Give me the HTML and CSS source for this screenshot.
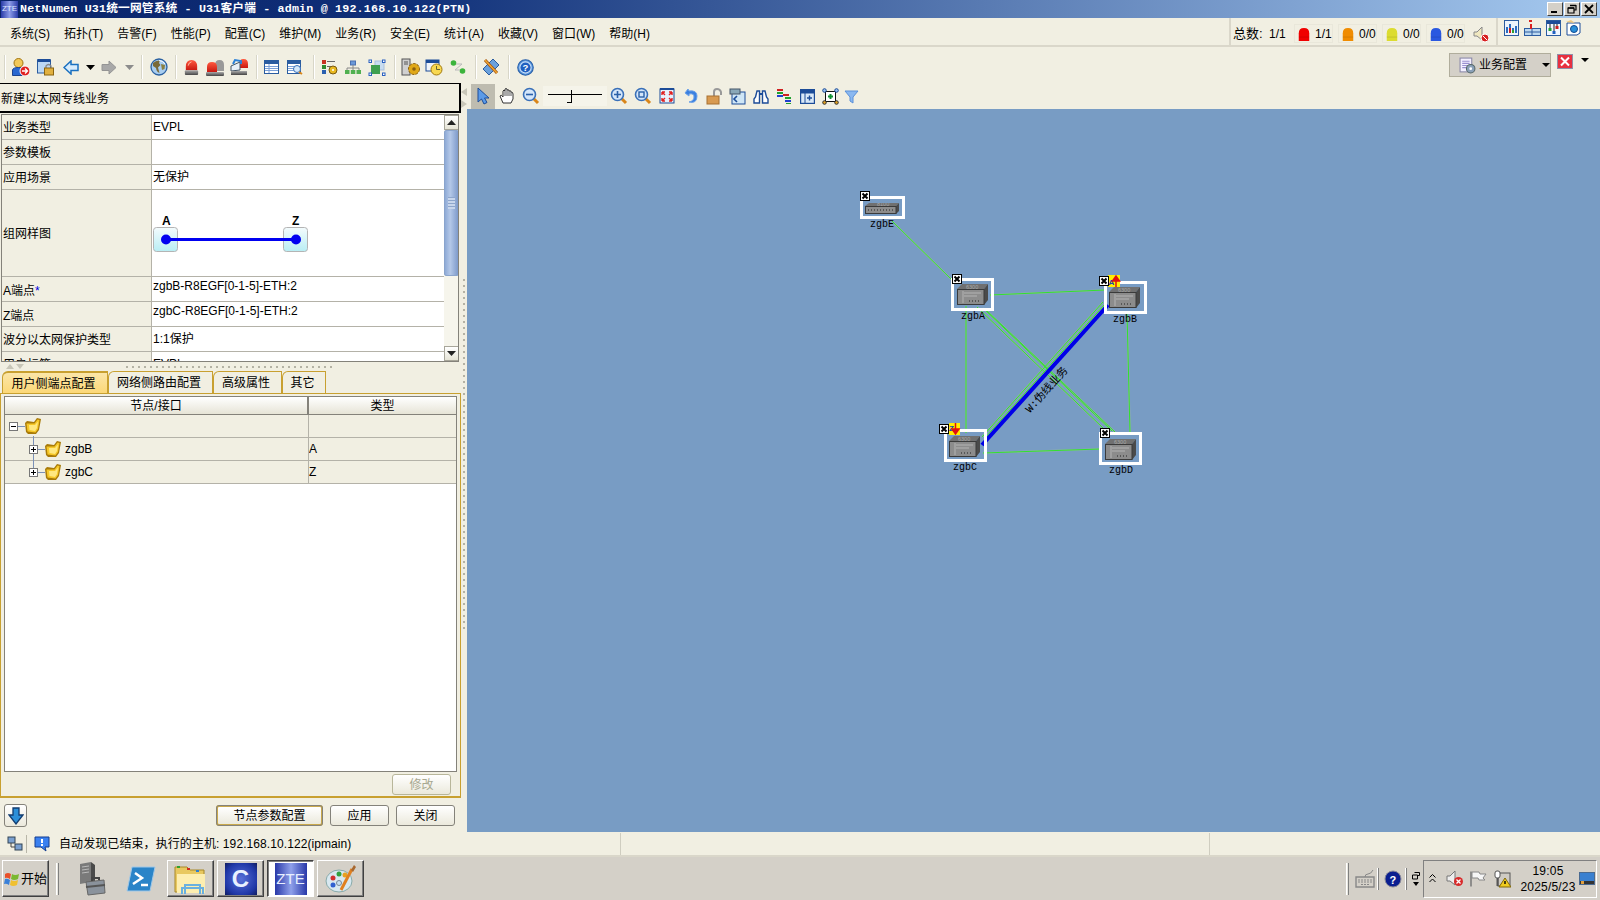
FILE: index.html
```html
<!DOCTYPE html>
<html lang="zh">
<head>
<meta charset="utf-8">
<title>NetNumen U31</title>
<link rel="stylesheet" href="styles.css">
</head>
<body>
<svg class="defs" width="0" height="0" aria-hidden="true">
  <defs>
    <symbol id="bell" viewBox="0 0 16 16" preserveAspectRatio="none"><path d="M1 16V7Q1 1 8 1T15 7V16Z" fill="currentColor"/><path d="M1 11.500H15" stroke="#000" stroke-opacity=".14"/></symbol>
    <linearGradient id="redg" x1="0" y1="0" x2="0" y2="1"><stop offset="0" stop-color="#ff5a40"/><stop offset="1" stop-color="#c81810"/></linearGradient>
    <linearGradient id="baseg" x1="0" y1="0" x2="0" y2="1"><stop offset="0" stop-color="#aaa"/><stop offset="1" stop-color="#444"/></linearGradient>
    <symbol id="alarm" viewBox="0 0 18 18"><path d="M3 12V8Q3 1 9 1T15 8V12Z" fill="url(#redg)"/><path d="M5.500 7Q6 3.500 9 3" stroke="#ffc0a8" fill="none"/><rect x="2" y="12" width="14" height="5" rx="1" fill="url(#baseg)"/></symbol>
    <symbol id="folder" viewBox="0 0 16 16"><path d="M0 5L1 14 3 16 11 16 14 12 16 1 12 0 9 4 2 3Z" fill="#a87a08"/><path d="M1.500 5.500L2.500 13.500 10.500 14.500 13 11 14.500 2 12.500 1.500 9.500 5.500Z" fill="#f6c828"/><path d="M4 7L4.500 12 10 13 12 10 13 3.500 10 7Z" fill="#ffe880"/></symbol>
    <symbol id="zoomic" viewBox="0 0 18 18"><path d="M11 11L16 16" stroke="#d9861a" stroke-width="3"/><circle cx="7.500" cy="7.500" r="6" fill="#d4e6fa" stroke="#3a70b8" stroke-width="1.600"/></symbol>
    <symbol id="dev6300" viewBox="0 0 31 21"><path d="M0 5L5 0H31L27 5Z" fill="#707070"/><path d="M27 5L31 0V16L27 21Z" fill="#4a4a4a"/><rect x=".5" y="5.500" width="26.500" height="15" fill="#8c8c8c" stroke="#3a3a3a"/><path d="M6 7V19M7 9H24M7 12H20" stroke="#b4b4b4"/><path d="M12 17H24" stroke="#222" stroke-dasharray="1 2"/><text x="9" y="4.500" class="devtext">6300</text></symbol>
    <symbol id="dev8100" viewBox="0 0 34 11"><path d="M0 3L4 0H34L31 3Z" fill="#707070"/><path d="M31 3L34 0V8L31 11Z" fill="#4a4a4a"/><rect x=".5" y="3.500" width="30.500" height="7" fill="#8c8c8c" stroke="#3a3a3a"/><path d="M3 7H29" stroke="#222" stroke-dasharray="1 2"/><text x="12" y="3" class="devtext">8100</text></symbol>
    <symbol id="xmark" viewBox="0 0 10 10"><rect x=".5" y=".5" width="9" height="9" fill="#fff" stroke="#000"/><path d="M2.500 2.500L7.500 7.500M7.500 2.500L2.500 7.500" stroke="#000" stroke-width="2"/></symbol>
    <g id="lk">
      <path d="M892 221L952 280"/><path d="M990 295L1105 290"/><path d="M966 306V433"/>
      <path d="M986 310L1115 432"/><path d="M983 308L1112 431"/><path d="M977 307L1103 428"/><path d="M1127 313L1130 433"/><path d="M983 453L1100 449"/><path d="M1103 302L982 437"/><path d="M1105 304L984 439"/>
    </g>
  </defs>
</svg>

<div class="title">
  <span class="ztelogo">ZTE</span>
  <span class="titletext">NetNumen U31统一网管系统 - U31客户端 - admin @ 192.168.10.122(PTN)</span>
  <span class="winbtns">
    <span class="winbtn"><svg width="14" height="12"><path d="M3 9H9" stroke="#000" stroke-width="2"/></svg></span>
    <span class="winbtn"><svg width="14" height="12"><path d="M5 2.500H11V7H9M3 5H9V10H3Z" fill="none" stroke="#000" stroke-width="1.200"/><path d="M5 2.500H11M3 5H9" stroke="#000" stroke-width="1.600"/></svg></span>
    <span class="winbtn"><svg width="14" height="12"><path d="M3 2L11 10M11 2L3 10" stroke="#000" stroke-width="1.800"/></svg></span>
  </span>
</div>

<div class="menubar">
  <nav class="menus">
    <span>系统(S)</span><span>拓扑(T)</span><span>告警(F)</span><span>性能(P)</span><span>配置(C)</span><span>维护(M)</span><span>业务(R)</span><span>安全(E)</span><span>统计(A)</span><span>收藏(V)</span><span>窗口(W)</span><span>帮助(H)</span>
  </nav>
  <div class="alarms">
    <span class="altotal">总数:</span><span class="alfirst">1/1</span>
    <span class="alarm red"><svg width="12" height="14"><use href="#bell"/></svg>1/1</span>
    <span class="alarm orange"><svg width="12" height="14"><use href="#bell"/></svg>0/0</span>
    <span class="alarm yellow"><svg width="12" height="14"><use href="#bell"/></svg>0/0</span>
    <span class="alarm blue"><svg width="12" height="14"><use href="#bell"/></svg>0/0</span>
    <svg class="spk" width="17" height="18" viewBox="0 0 17 18"><path d="M1 7H4L9 2V15L4 11H1Z" fill="#f0e8c0" stroke="#888"/><circle cx="12" cy="13" r="4" fill="#d82020" stroke="#fff"/><path d="M10 11L14 15" stroke="#fff"/></svg>
  </div>
  <div class="corner">
    <svg width="15" height="16" viewBox="0 0 15 16"><rect x=".5" y=".5" width="14" height="15" fill="#eef4fc" stroke="#2c5ca0"/><path d="M3 13V7M6 13V4M9 13V8M12 13V6" stroke-width="2" stroke="#2c6cc0"/><path d="M6 13V8" stroke="#d02020" stroke-width="2"/><path d="M9 13V10" stroke="#30a030" stroke-width="2"/></svg>
    <svg width="17" height="16" viewBox="0 0 17 16"><rect x=".5" y="8.500" width="16" height="7" fill="#bcd8f0" stroke="#2c5ca0"/><path d="M1 12H16M8 9V15" stroke="#2c5ca0"/><path d="M7 9V4" stroke="#d82020" stroke-width="2" fill="none"/><rect x="5" y="0" width="3" height="2" fill="#d82020"/></svg>
    <svg width="15" height="16" viewBox="0 0 15 16"><rect x=".5" y=".5" width="14" height="15" fill="#f0f6ff" stroke="#2c5ca0"/><path d="M1 1H14V4H1Z" fill="#1c4c98"/><path d="M4 4V9M8 4V13M11 4V7" stroke="#222"/><rect x="2.500" y="8" width="3" height="3" fill="#20a030"/><rect x="6.500" y="11" width="3" height="3" fill="#2060c0"/><rect x="9.500" y="6" width="3" height="3" fill="#d02020"/></svg>
    <svg width="15" height="16" viewBox="0 0 15 16"><path d="M1 3H14V13L11 15H1Z" fill="#fff" stroke="#1c4c98"/><path d="M0 2L5 0 9 3Z" fill="#f0c880"/><circle cx="8" cy="9" r="3.500" fill="#2a8fd8" stroke="#124a90"/></svg>
  </div>
</div>

<div class="toolbar">
  <span class="sep first"></span>
  <div class="grp g1">
    <span class="ti w25"><svg width="18" height="18" viewBox="0 0 18 18"><circle cx="6.500" cy="5" r="4.500" fill="#f2c858" stroke="#a07410"/><path d="M.5 17.500V12Q1 9.500 6.500 9.500T12 12V17.500Z" fill="#2a68d0" stroke="#1c4490"/><circle cx="13" cy="13" r="5" fill="#e02020" stroke="#fff"/><path d="M10 13H15M13 10.500L15.500 13 13 15.500" stroke="#fff" stroke-width="1.300" fill="none"/></svg></span>
    <span class="ti w25"><svg width="18" height="18" viewBox="0 0 18 18"><rect x=".5" y="2" width="13" height="13" fill="#bcd8f4" stroke="#2a5ca0"/><rect x=".5" y="1" width="13" height="3" fill="#1c4c98"/><path d="M9 10V8Q11.500 5 14 8V10" fill="none" stroke="#888" stroke-width="1.300"/><rect x="7.500" y="10" width="9" height="7" fill="#e0b040" stroke="#8a6410"/></svg></span>
    <span class="ti w25"><svg width="16" height="15" viewBox="0 0 16 15"><path d="M1 7.500L8 1V4.500H15V10.500H8V14Z" fill="#d8ecfc" stroke="#1a70c0" stroke-width="1.500"/></svg></span>
    <span class="ti w15"><svg width="9" height="5"><path d="M0 0H9L4.500 5Z" fill="#000"/></svg></span>
    <span class="ti w22"><svg width="16" height="15" viewBox="0 0 16 15"><path d="M15 7.500L8 1V4.500H1V10.500H8V14Z" fill="#a8a8a8" stroke="#949494"/></svg></span>
    <span class="ti w19"><svg width="9" height="5"><path d="M0 0H9L4.500 5Z" fill="#8c8c8c"/></svg></span>
  </div>
  <span class="sep"></span>
  <div class="grp g2">
    <span class="ti"><svg width="18" height="18" viewBox="0 0 18 18"><circle cx="9" cy="9" r="8" fill="#a8cdf0" stroke="#2a60a0" stroke-width="1.300"/><path d="M3 5Q6 2 10 2.500L9 5 10.500 7 8 9.500 9.500 15Q6.500 14 6 10L3 8Z" fill="#7a6a38"/><path d="M11 6L15 7 14.500 11 12 12Z" fill="#8a8040"/><path d="M9 2.500Q13 2.500 15 6" stroke="#fff" fill="none"/></svg></span>
  </div>
  <span class="sep"></span>
  <div class="grp g3">
    <span class="ti"><svg width="17" height="17"><use href="#alarm"/></svg></span>
    <span class="ti"><svg width="19" height="17" viewBox="0 0 19 17"><path d="M9 12V6Q9 1 13.500 1T18 6V12Z" fill="#999"/><path d="M1 13V8Q1 3 6 3T11 8V13Z" fill="url(#redg)"/><rect y="13" width="18" height="4" rx="1" fill="url(#baseg)"/></svg></span>
    <span class="ti"><svg width="19" height="18" viewBox="0 0 19 18"><path d="M9 10V6Q9 1 13.500 1T18 6V10Z" fill="url(#redg)"/><path d="M1 8L10 4V12L1 13Z" fill="#e8f0f8" stroke="#456"/><path d="M3 6L5 2 11 3 11 6" fill="none" stroke="#2a80d8" stroke-width="2"/><rect x="1" y="13" width="16" height="4" fill="url(#baseg)"/></svg></span>
  </div>
  <span class="sep"></span>
  <div class="grp g4">
    <span class="ti"><svg width="15" height="14" viewBox="0 0 15 14"><rect x=".5" y=".5" width="14" height="13" fill="#fff" stroke="#2a5ca0"/><rect x="1" y="1" width="13" height="3" fill="#2a5ca0"/><path d="M1 6.500H14M1 8.500H14M1 10.500H14M5 4V13" stroke="#7aa0d8"/></svg></span>
    <span class="ti"><svg width="16" height="15" viewBox="0 0 16 15"><rect x=".5" y=".5" width="13" height="13" fill="#fff" stroke="#2a5ca0"/><rect x="1" y="1" width="12" height="3" fill="#2a5ca0"/><path d="M1 6.500H13M1 8.500H8M1 10.500H8" stroke="#7aa0d8"/><circle cx="10" cy="9" r="3.500" fill="#d4e8fa" stroke="#3a70b8"/><path d="M12 12L15 14" stroke="#d9861a" stroke-width="2"/></svg></span>
  </div>
  <span class="sep"></span>
  <div class="grp g5">
    <span class="ti"><svg width="17" height="16" viewBox="0 0 17 16"><rect x="1" y="1" width="4" height="4" fill="#c83020"/><rect x="1" y="6" width="4" height="4" fill="#308830"/><rect x="1" y="11" width="4" height="4" fill="#2a60b0"/><path d="M6 2.500H14M6 7.500H10" stroke="#666"/><circle cx="12" cy="11" r="4" fill="#e8b820" stroke="#7a5a10"/><circle cx="12" cy="11" r="1" fill="#fff"/></svg></span>
    <span class="ti"><svg width="16" height="15" viewBox="0 0 16 15"><rect x="5.500" y="1" width="5" height="4" fill="#6a98d8" stroke="#4a70b0"/><path d="M8 5V8M2 11V8H14V11M8 8V11" stroke="#888" fill="none"/><rect y="10" width="4.500" height="4" fill="#50b050"/><rect x="5.800" y="10" width="4.500" height="4" fill="#50b050"/><rect x="11.500" y="10" width="4.500" height="4" fill="#50b050"/></svg></span>
    <span class="ti"><svg width="18" height="17" viewBox="0 0 18 17"><rect x="7" y="2" width="9" height="9" fill="#c8dcf0" stroke="#a8c0dc"/><rect x="3" y="6" width="9" height="9" fill="#3fa050"/><rect x="1" y="1" width="2.500" height="2.500" fill="#fff" stroke="#2a60c0"/><rect x="14.500" y="1" width="2.500" height="2.500" fill="#fff" stroke="#2a60c0"/><rect x="1" y="14" width="2.500" height="2.500" fill="#fff" stroke="#2a60c0"/><rect x="14.500" y="14" width="2.500" height="2.500" fill="#fff" stroke="#2a60c0"/></svg></span>
  </div>
  <span class="sep"></span>
  <div class="grp g6">
    <span class="ti"><svg width="19" height="18" viewBox="0 0 19 18"><rect x="1" y="1" width="8" height="16" fill="#d0d0d0" stroke="#555"/><path d="M3 4H7M3 6H7" stroke="#555"/><circle cx="13" cy="11" r="5.500" fill="#e0a818" stroke="#8a6010" stroke-dasharray="3 1"/><circle cx="13" cy="11" r="1.800" fill="#8a6010"/></svg></span>
    <span class="ti"><svg width="18" height="17" viewBox="0 0 18 17"><rect x="1" y="1" width="13" height="11" fill="#f0f4fa" stroke="#1c4c98"/><rect x="1" y="1" width="13" height="3" fill="#1c4c98"/><circle cx="11.500" cy="10.500" r="5.500" fill="#f8d850" stroke="#a07810"/><path d="M11.500 7V10.500H15" stroke="#663" fill="none"/></svg></span>
    <span class="ti"><svg width="16" height="14" viewBox="0 0 16 14"><circle cx="3.500" cy="3" r="2.800" fill="#3cb43c"/><circle cx="12.500" cy="11" r="2.800" fill="#3cb43c"/><path d="M6 4H12L5 10H10" stroke="#bbb" fill="none"/></svg></span>
  </div>
  <span class="sep"></span>
  <div class="grp g7">
    <span class="ti"><svg width="18" height="18" viewBox="0 0 18 18"><path d="M11 1L17 7 7 17 1 11Z" fill="#6aa0dc" stroke="#2a5ca0"/><path d="M3 2L15 15" stroke="#a05010" stroke-width="3"/><path d="M3 2L15 15" stroke="#f0a830" stroke-width="1.500"/></svg></span>
  </div>
  <span class="sep"></span>
  <div class="grp g8">
    <span class="ti"><svg width="17" height="17" viewBox="0 0 16 16"><circle cx="8" cy="8" r="7.300" fill="#5a98e0" stroke="#2a60a8"/><circle cx="8" cy="8" r="5.300" fill="#2060c0" stroke="#cfe2f8"/><text x="5.200" y="11.500" class="q">?</text></svg></span>
  </div>
  <div class="tbright">
    <span class="bizbtn"><svg width="17" height="17" viewBox="0 0 16 16"><rect x="1" y="1" width="11" height="13" fill="#f4f0ff" stroke="#8a88a8"/><path d="M3 4H10M3 6H10M3 8H8M3 10H7" stroke="#9a90d0"/><circle cx="11" cy="11" r="4" fill="#8aa0b8" stroke="#566"/><circle cx="11" cy="11" r="1.300" fill="#fff"/></svg><span class="biztext">业务配置</span><svg class="bizdrop" width="8" height="4"><path d="M0 0H8L4 4Z" fill="#000"/></svg></span>
    <svg class="redx" width="16" height="15" viewBox="0 0 16 15"><rect x=".5" y=".5" width="15" height="14" fill="#e83040" stroke="#9090a8"/><path d="M4 3.500L12 11.500M12 3.500L4 11.500" stroke="#fff" stroke-width="2"/></svg>
    <svg class="menudrop" width="8" height="4"><path d="M0 0H8L4 4Z" fill="#000"/></svg>
  </div>
</div>

<div class="main">
  <section class="panel">
    <div class="phead">新建以太网专线业务</div>
    <div class="ptable">
      <div class="rows">
        <div class="row"><div class="k">业务类型</div><div class="v">EVPL</div></div>
        <div class="row"><div class="k">参数模板</div><div class="v"></div></div>
        <div class="row"><div class="k">应用场景</div><div class="v">无保护</div></div>
        <div class="row tall"><div class="k">组网样图</div><div class="v">
          <svg class="netsample" width="160" height="50" viewBox="0 0 160 50">
            <text x="9" y="13" class="azl">A</text><text x="139" y="13" class="azl">Z</text>
            <defs><linearGradient id="nb" x1="0" y1="0" x2="0" y2="1"><stop offset="0" stop-color="#f4fbfd"/><stop offset="1" stop-color="#b8eef4"/></linearGradient></defs>
            <rect x=".5" y="15.500" width="24" height="24" rx="3" fill="url(#nb)" stroke="#b4b4b4"/>
            <rect x="130.500" y="15.500" width="24" height="24" rx="3" fill="url(#nb)" stroke="#b4b4b4"/>
            <path d="M13 27.500H143" stroke="#0000f0" stroke-width="3"/>
            <circle cx="13" cy="27.500" r="5" fill="#0000f0"/><circle cx="143" cy="27.500" r="5" fill="#0000f0"/>
          </svg>
        </div></div>
        <div class="row"><div class="k lowered">A端点<span class="star">*</span></div><div class="v raised">zgbB-R8EGF[0-1-5]-ETH:2</div></div>
        <div class="row"><div class="k lowered">Z端点</div><div class="v raised">zgbC-R8EGF[0-1-5]-ETH:2</div></div>
        <div class="row"><div class="k">波分以太网保护类型</div><div class="v">1:1保护</div></div>
        <div class="row"><div class="k">用户标签</div><div class="v">EVPL</div></div>
      </div>
      <div class="scroll">
        <span class="sbtn"><svg width="9" height="5"><path d="M0 5H9L4.500 0Z" fill="#222"/></svg></span>
        <span class="thumb"><span class="grip"></span></span>
        <span class="strack"></span>
        <span class="sbtn"><svg width="9" height="5"><path d="M0 0H9L4.500 5Z" fill="#222"/></svg></span>
      </div>
    </div>
    <div class="hsplit">
      <svg width="24" height="6"><path d="M4 5H12L8 0Z" fill="#c8c6b8"/><path d="M14 0H22L18 5Z" fill="#c8c6b8"/></svg>
      <span class="hdots"></span>
    </div>
    <div class="tabs">
      <span class="tab on t1">用户侧端点配置</span><span class="tab t2">网络侧路由配置</span><span class="tab t3">高级属性</span><span class="tab t4">其它</span>
    </div>
    <div class="tabbody">
      <div class="tree">
        <div class="thead"><span class="hc c1">节点/接口</span><span class="hc c2">类型</span></div>
        <div class="trow">
          <div class="tc c1"><span class="tg minus"></span><span class="dash"></span><svg width="16" height="16"><use href="#folder"/></svg></div>
          <div class="tc c2"></div>
        </div>
        <div class="trow">
          <div class="tc c1 child"><span class="vline"></span><span class="tg plus"></span><span class="dash"></span><svg width="16" height="16"><use href="#folder"/></svg><span class="tname">zgbB</span></div>
          <div class="tc c2">A</div>
        </div>
        <div class="trow">
          <div class="tc c1 child"><span class="vline half"></span><span class="tg plus"></span><span class="dash"></span><svg width="16" height="16"><use href="#folder"/></svg><span class="tname">zgbC</span></div>
          <div class="tc c2">Z</div>
        </div>
      </div>
      <div class="editrow"><span class="btn disabled">修改</span></div>
    </div>
    <div class="pfoot">
      <span class="btn arrowbtn"><svg width="16" height="18" viewBox="0 0 16 18"><path d="M5 1H11V8H15L8 17 1 8H5Z" fill="#2c8fd8" stroke="#123c70" stroke-width="1.300"/></svg></span>
      <span class="btn def">节点参数配置</span>
      <span class="btn b2">应用</span>
      <span class="btn b3">关闭</span>
    </div>
  </section>
  <div class="vsplit"><span class="collapse"><svg width="6" height="26"><path d="M6 3V11L0 7Z" fill="#c8c6b8"/><path d="M0 15V23L6 19Z" fill="#c8c6b8"/></svg></span><span class="vdots"></span></div>
  <section class="work">
    <div class="ctools">
      <span class="ct sel"><svg width="16" height="18" viewBox="0 0 16 18"><path d="M3 1V15L6.500 12 9 17 12 15.500 9.500 11H14Z" fill="#5a9ae8" stroke="#1c4c98"/></svg></span>
      <span class="ct"><svg width="17" height="18" viewBox="0 0 17 18"><path d="M4 16L1 9Q2 7 4 10V4Q5 2 6 4V2Q7 1 8 2V3Q10 2 10 4 12 3 12 5 14 5 14 7V12L12 16Z" fill="#fff" stroke="#333"/><path d="M6 4V9M8 3V9M10 4V9M12 5V9" stroke="#555"/></svg></span>
      <span class="ct"><svg width="18" height="18"><use href="#zoomic"/><path d="M4 7.500H11" stroke="#2a60a8" stroke-width="1.600"/></svg></span>
      <span class="slider"><span class="knob"></span></span>
      <span class="ct"><svg width="18" height="18"><use href="#zoomic"/><path d="M4 7.500H11M7.500 4V11" stroke="#2a60a8" stroke-width="1.600"/></svg></span>
      <span class="ct"><svg width="18" height="18"><use href="#zoomic"/><rect x="5" y="5" width="5" height="5" fill="none" stroke="#2a60a8" stroke-width="1.400"/></svg></span>
      <span class="ct"><svg width="16" height="16" viewBox="0 0 16 16"><rect x="1" y="1" width="14" height="14" fill="#e8f0fa" stroke="#1c4c98"/><rect x="1" y="0" width="14" height="2" fill="#1c4c98"/><path d="M3 4L6 7M3 4H6M3 4V7M13 4L10 7M13 4H10M13 4V7M3 13L6 10M3 13H6M3 13V10M13 13L10 10M13 13H10M13 13V10" stroke="#e02020" stroke-width="1.400" fill="none"/></svg></span>
      <span class="ct"><svg width="14" height="16" viewBox="0 0 14 16"><path d="M4 1L1 5 5 8V6Q10 5 10 9T5 14Q13 16 13 8 13 2 5 3Z" fill="#3a80e0" stroke="#6aa0e8"/></svg></span>
      <span class="ct n"><svg width="17" height="17" viewBox="0 0 17 17"><path d="M8 8V4Q8 1 11 1T15 4V7" fill="none" stroke="#999" stroke-width="2"/><rect x="1" y="8" width="12" height="8" fill="#d89a50" stroke="#a87030"/></svg></span>
      <span class="ct n"><svg width="17" height="17" viewBox="0 0 17 17"><rect x="3" y="4" width="13" height="12" fill="#cfe6f6" stroke="#1c4c98"/><rect x="1" y="1" width="10" height="5" fill="#8aa8b8" stroke="#456"/><path d="M8 8L5 11 8 14" fill="none" stroke="#1c4c98" stroke-width="1.600"/></svg></span>
      <span class="ct"><svg width="16" height="15" viewBox="0 0 16 15"><path d="M2.500 8L4 2H6.500V14H1V10ZM13.500 8L12 2H9.500V14H15V10Z" fill="#fff" stroke="#1c4c98" stroke-width="1.400"/><path d="M6.500 5H9.500" stroke="#1c4c98" stroke-width="2"/></svg></span>
      <span class="ct n"><svg width="17" height="17" viewBox="0 0 17 17"><path d="M1 2H7" stroke="#d02020" stroke-width="2"/><path d="M1 5H7" stroke="#20a030" stroke-width="2"/><path d="M1 8H7" stroke="#2040d0" stroke-width="2"/><path d="M7 7H13" stroke="#d02020" stroke-width="2"/><path d="M9 10H15" stroke="#20a030" stroke-width="2"/><path d="M9 13H15" stroke="#2040d0" stroke-width="2"/><path d="M10 15.500H15" stroke="#20a030"/></svg></span>
      <span class="ct n"><svg width="15" height="15" viewBox="0 0 15 15"><rect x=".5" y=".5" width="14" height="14" fill="#d8e8f8" stroke="#1c4c98" stroke-width="1.400"/><path d="M1 4H14M5 4V14" stroke="#1c4c98"/><rect x="1" y="1" width="13" height="3" fill="#1c4c98"/><path d="M7 9H12M9.500 6.500V11.500" stroke="#1c4c98" stroke-width="1.400"/></svg></span>
      <span class="ct n"><svg width="17" height="17" viewBox="0 0 17 17"><rect x="3.500" y="3.500" width="10" height="10" fill="#fff" stroke="#111"/><path d="M6 8.500H11M8.500 6V11" stroke="#109030" stroke-width="2"/><circle cx="2.500" cy="2.500" r="1.800" fill="#9ac0f0" stroke="#1c4c98"/><circle cx="14.500" cy="2.500" r="1.800" fill="#9ac0f0" stroke="#1c4c98"/><circle cx="2.500" cy="14.500" r="1.800" fill="#e0a020" stroke="#333"/><circle cx="14.500" cy="14.500" r="1.800" fill="#e0a020" stroke="#333"/></svg></span>
      <span class="ct last"><svg width="15" height="15" viewBox="0 0 15 15"><path d="M1 2H14L9 8V14L6 12V8Z" fill="#8ab8f0" stroke="#5a90d8"/></svg></span>
    </div>
    <div class="canvas">
      <svg class="topo" viewBox="467 109 1133 723">
        <g class="links">
          <use href="#lk" class="lkbg"/>
          <use href="#lk" class="lkfg"/>
        </g>
        <path d="M1108 305L982 445" class="wire"/>
        <text x="1047" y="393" transform="rotate(-48 1047 390)" class="wlabel">W:伪线业务</text>

        <rect x="861.500" y="197.500" width="42" height="20" class="frame"/>
        <use href="#dev8100" x="865" y="203" width="34" height="11"/>
        <use href="#xmark" x="860" y="191" width="10" height="10"/>
        <text x="882" y="227" class="nlabel">zgbE</text>

        <rect x="952.500" y="279.500" width="40" height="30" class="frame"/>
        <use href="#dev6300" x="957" y="284" width="31" height="21"/>
        <use href="#xmark" x="952" y="274" width="10" height="10"/>
        <text x="973" y="319" class="nlabel">zgbA</text>

        <rect x="1105.500" y="282.500" width="40" height="30" class="frame"/>
        <use href="#dev6300" x="1109" y="287" width="31" height="21"/>
        <rect x="1108" y="275" width="12" height="12" fill="#ffee00"/>
        <text x="1108.500" y="285" class="flagl">A</text>
        <path d="M1116 287V278M1112.500 281L1116 276 1119.500 281Z" stroke="#e01010" fill="#e01010" stroke-width="1.500"/>
        <use href="#xmark" x="1099" y="276" width="10" height="10"/>
        <text x="1125" y="322" class="nlabel">zgbB</text>

        <rect x="945.500" y="430.500" width="40" height="30" class="frame"/>
        <use href="#dev6300" x="949" y="436" width="31" height="21"/>
        <rect x="949" y="423" width="11" height="12" fill="#ffee00"/>
        <text x="949" y="431" class="flagl">Z</text>
        <path d="M955.500 423V432M952 429L955.500 434 959 429Z" stroke="#e01010" fill="#e01010" stroke-width="1.500"/>
        <use href="#xmark" x="939" y="424" width="10" height="10"/>
        <text x="965" y="470" class="nlabel">zgbC</text>

        <rect x="1100.500" y="433.500" width="40" height="30" class="frame"/>
        <use href="#dev6300" x="1105" y="439" width="31" height="21"/>
        <use href="#xmark" x="1100" y="428" width="10" height="10"/>
        <text x="1121" y="473" class="nlabel">zgbD</text>
      </svg>
    </div>
  </section>
</div>

<div class="status">
  <span class="stcell s1">
    <svg class="sti" width="16" height="16" viewBox="0 0 16 16"><rect x="1" y="1" width="7" height="6" fill="#7aa0d0" stroke="#345"/><rect x="8" y="8" width="7" height="6" fill="#7aa0d0" stroke="#345"/><path d="M4 7V11H8" stroke="#444" fill="none"/></svg>
    <span class="stsep"></span>
    <svg class="sti" width="16" height="16" viewBox="0 0 16 16"><path d="M1 1H15V11H11L12 15 7 11H1Z" fill="#3a80f0" stroke="#123c90"/><path d="M8 3V7" stroke="#fff" stroke-width="2"/><path d="M8 8V10" stroke="#fff" stroke-width="2"/></svg>
    <span class="sttext">自动发现已结束，执行的主机: 192.168.10.122(ipmain)</span>
  </span>
  <span class="stcell s2"></span>
  <span class="stcell s3"></span>
</div>

<div class="taskbar">
  <span class="start"><svg width="16" height="16" viewBox="0 0 16 16"><path d="M1 3Q4 1 7 3L6 8Q3 6 1 7Z" fill="#e8502a"/><path d="M8 3Q11 5 15 3L14 8Q10 10 7 8Z" fill="#7ab830"/><path d="M1 8Q3 7 6 9L5 14Q2 12 0 13Z" fill="#3a80d8"/><path d="M7 9Q10 11 14 9L13 14Q9 16 6 14Z" fill="#f0c030"/></svg>开始</span>
  <span class="tsep"></span>
  <div class="apps">
    <span class="app plain a1"><svg width="30" height="34" viewBox="0 0 30 34"><path d="M3 2L14 0V20L3 22Z" fill="#7a7a7a"/><path d="M14 0L18 3V19L14 20Z" fill="#4a4a4a"/><path d="M5 5L12 4M5 8L12 7M5 11L12 10" stroke="#bbb"/><path d="M9 20L27 18 28 31 11 33Z" fill="#8a929c" stroke="#666"/><path d="M9 25L28 23" stroke="#555" stroke-width="2"/><path d="M15 19V16H22V18" fill="none" stroke="#444" stroke-width="2"/></svg></span>
    <span class="app plain a2"><svg width="30" height="26" viewBox="0 0 30 26"><path d="M6 1H29L24 25H1Z" fill="#2a84c8" stroke="#a0c8e8"/><path d="M9 7L16 12 7 18" fill="none" stroke="#fff" stroke-width="2.500"/><path d="M15 19H22" stroke="#fff" stroke-width="2.500"/></svg></span>
    <span class="app"><svg width="34" height="32" viewBox="0 0 34 32"><path d="M1 4H13L16 7H30V29H1Z" fill="#e8c860" stroke="#a88828"/><rect x="3" y="3" width="3" height="2" fill="#30a030"/><rect x="13" y="5" width="3" height="2" fill="#d03020"/><rect x="22" y="7" width="3" height="2" fill="#3080d0"/><path d="M3 11H31V30H3Z" fill="#fdeeb0"/><path d="M11 31V22H26V31M8 31V25H29V31" fill="none" stroke="#6ab0e0" stroke-width="2"/></svg></span>
    <span class="app"><span class="tile ctile">C</span></span>
    <span class="app active"><span class="tile ztile">ZTE</span></span>
    <span class="app"><svg width="32" height="32" viewBox="0 0 32 32"><ellipse cx="14" cy="18" rx="13" ry="11" fill="#d8e8f0" stroke="#8aa"/><circle cx="8" cy="15" r="2.500" fill="#d03030"/><circle cx="14" cy="11" r="2.500" fill="#30a040"/><circle cx="20" cy="12" r="2.500" fill="#e8a020"/><circle cx="8" cy="22" r="2.500" fill="#3060d0"/><circle cx="14" cy="20" r="2.500" fill="#c8e0f0" stroke="#789"/><path d="M16 27L27 6" stroke="#e08020" stroke-width="3"/><path d="M26 7L29 2 31 4 28 9Z" fill="#a86830"/></svg></span>
  </div>
  <div class="tright">
    <span class="tsep"></span>
    <svg class="kbd" width="24" height="20" viewBox="0 0 24 20"><path d="M3 8H21V18H3Z" fill="#d4d0c8" stroke="#888" stroke-width="1.400"/><path d="M5 11H19M5 13H19M8 15.500H16" stroke="#888" stroke-dasharray="2 1"/><path d="M12 8Q12 5 15 5T20 1" fill="none" stroke="#888"/></svg>
    <span class="tsep short"></span>
    <svg class="hlp" width="18" height="18" viewBox="0 0 18 18"><circle cx="9" cy="9" r="8" fill="#0a1e90" stroke="#889"/><text x="5.500" y="13.500" class="qb">?</text></svg>
    <span class="tsep short"></span>
    <span class="restore"><svg width="8" height="8" viewBox="0 0 8 8"><path d="M2.500 .5H7.500V3.500H5.500M.5 3H5.500V7H.5Z" fill="none" stroke="#000"/></svg><svg width="6" height="4"><path d="M0 0H6L3 4Z" fill="#000"/></svg></span>
    <div class="tray">
      <svg class="chev" width="7" height="9" viewBox="0 0 7 9"><path d="M.5 3.500L3.500 .5 6.500 3.500M.5 8L3.500 5 6.500 8" fill="none" stroke="#000"/></svg>
      <svg class="tic t-spk" width="18" height="17" viewBox="0 0 18 17"><path d="M1 6H4L9 1V15L4 11H1Z" fill="#eee" stroke="#777"/><circle cx="12.500" cy="11.500" r="4.500" fill="#d82a2a"/><path d="M10.500 9.500L14.500 13.500M14.500 9.500L10.500 13.500" stroke="#fff" stroke-width="1.300"/></svg>
      <svg class="tic t-flag" width="17" height="16" viewBox="0 0 17 16"><path d="M1 .5V15.500" stroke="#777" stroke-width="1.500"/><path d="M2 1H9L10 3H16L13 7 15 9H9L8 7H2Z" fill="#f6f6f6" stroke="#888"/></svg>
      <svg class="tic t-net" width="17" height="18" viewBox="0 0 17 18"><rect x="4" y="3" width="12" height="13" fill="#cfcbc3" stroke="#555"/><rect x="1" y="1" width="5" height="7" rx="2" fill="#fff" stroke="#555"/><path d="M3.500 8V16" stroke="#555" stroke-width="2"/><path d="M11 8L17 17H5Z" fill="#f0cc20" stroke="#806808"/><path d="M11 11V14" stroke="#000" stroke-width="1.400"/></svg>
      <span class="clock"><span>19:05</span><span>2025/5/23</span></span>
      <svg class="t-desk" width="16" height="14" viewBox="0 0 16 14"><rect x=".5" y=".5" width="15" height="12" fill="#3a80d0" stroke="#4a6a90"/><rect x="1" y="9" width="14" height="3" fill="#333"/><rect x="2" y="9" width="3" height="3" fill="#e0a040"/></svg>
    </div>
  </div>
</div>
</body>
</html>
```
FILE: styles.css
```css
* { box-sizing: border-box; }
html, body { margin: 0; padding: 0; }
body {
  width: 1600px; height: 900px; overflow: hidden;
  display: flex; flex-direction: column;
  background: #f1efe2; color: #000;
  font: 12px/16px "Liberation Sans", "Noto Sans CJK SC", sans-serif;
}
svg { display: block; flex: none; }
.defs { position: absolute; }
.devtext { font: 5.500px "Liberation Sans", sans-serif; fill: #a8a8a8; }
.q { font: bold 9px "Liberation Sans", sans-serif; fill: #fff; }
.qb { font: bold 11px "Liberation Sans", sans-serif; fill: #fff; }

/* title bar */
.title {
  height: 18px; flex: none; display: flex; align-items: center;
  background: linear-gradient(90deg, #0a246a 0, #0f2f78 25%, #a6caf0 100%);
  color: #fff;
}
.ztelogo {
  width: 17px; height: 17px; margin-left: 1px;
  background: linear-gradient(90deg, #2a3ca8, #8c9ce8 50%, #2a3ca8);
  font-size: 8px; line-height: 16px; text-align: center; color: #dfe6ff; flex: none;
}
.titletext { margin-left: 2px; font: bold 11.700px/18px "Liberation Mono", "Noto Sans CJK SC", monospace; letter-spacing: .17px; white-space: nowrap; }
.winbtns { margin-left: auto; margin-right: 3px; display: flex; gap: 1px; }
.winbtn {
  width: 16px; height: 14px; display: flex; align-items: center; justify-content: center;
  background: #d4d0c8; border: 1px solid; border-color: #fff #404040 #404040 #fff;
}

/* menu */
.menubar {
  height: 29px; flex: none; display: flex; align-items: center;
  border-bottom: 2px solid #dad7ca; padding-left: 10px;
}
.menus { display: flex; gap: 14px; width: 1219px; flex: none; padding-top: 5px; }
.menus span { flex: none; white-space: nowrap; line-height: 26px; }
.alarms {
  width: 269px; height: 27px; flex: none; display: flex; align-items: center;
  border-left: 2px solid #dad7ca; border-right: 2px solid #dad7ca; padding: 4px 0 0 2px;
}
.altotal { width: 36px; font-size: 13px; }
.alfirst { width: 25px; }
.alarm {
  width: 39px; height: 19px; margin-right: 5px; display: flex; align-items: center; gap: 5px;
  padding-left: 3px; border: 1px solid #e9e7da; flex: none;
}
.red svg { color: #f00000; } .orange svg { color: #f08c00; } .yellow svg { color: #dcdc30; } .blue svg { color: #2a58e0; }
.spk { margin-left: 3px; }
.corner { display: flex; gap: 5px; margin-left: 6px; align-self: flex-start; margin-top: 2px; }

/* main toolbar */
.toolbar { height: 36px; flex: none; display: flex; align-items: center; padding: 4px 0 0 4px; }
.sep { width: 2px; height: 24px; background: #d8d6c8; border-right: 1px solid #fff; flex: none; }
.grp { display: flex; justify-content: center; flex: none; }
.g1 { width: 135px; justify-content: flex-start; padding-left: 2px; }
.g2 { width: 32px; } .g3 { width: 79px; padding-right: 3px; }
.g4 { width: 55px; padding-right: 5px; } .g5 { width: 79px; padding-right: 3px; }
.g6 { width: 79px; padding-right: 3px; } .g7 { width: 31px; padding-right: 3px; }
.g8 { width: 30px; }
.ti { width: 24px; height: 24px; display: flex; align-items: center; justify-content: center; flex: none; }
.w25 { width: 25px; } .w15 { width: 15px; } .w22 { width: 22px; } .w19 { width: 19px; }
.tbright { margin-left: auto; margin-top: -4px; display: flex; align-items: flex-start; height: 36px; padding-top: 6px; padding-right: 11px; }
.bizbtn {
  width: 102px; height: 24px; display: flex; align-items: center; padding-left: 9px;
  background: #d4d0c8; border: 1px solid #b0ad9c; font-size: 12px; white-space: nowrap;
}
.biztext { margin-left: 3px; }
.bizdrop { margin-left: 15px; }
.redx { margin-left: 6px; margin-top: 1px; }
.menudrop { margin-left: 8px; margin-top: 5px; }

/* main */
.main { height: 749px; flex: none; display: flex; }
.panel { width: 461px; flex: none; display: flex; flex-direction: column; }
.phead {
  height: 30px; flex: none; border: 1px solid #000; border-width: 1px 2px 2px 1px; border-left: 0;
  line-height: 29px; font-size: 12px; padding: 1px 0 0 1px;
}
.ptable {
  height: 248px; flex: none; margin: 1px 2px 0 1px; display: flex;
  border: 1px solid #84827a; background: #fff; overflow: hidden;
}
.rows { width: 442px; flex: none; overflow: hidden; }
.row { height: 25px; display: flex; border-bottom: 1px solid #b4b2a8; }
.tall { height: 87px; }
.k { width: 150px; flex: none; background: #f1efe2; border-right: 1px solid #b4b2a8; padding: 1px 0 0 1px; display: flex; align-items: center; font-size: 12px; }
.v { flex: 1; padding-left: 1px; display: flex; align-items: center; background: #fff; }
.lowered { padding-top: 4px; }
.raised { padding-bottom: 6px; }
.star { color: #0000e0; }
.netsample { margin-top: 7px; }
.azl { font: bold 12px "Liberation Sans", sans-serif; }
.scroll { width: 15px; flex: none; display: flex; flex-direction: column; background: #f6f5ec; }
.sbtn {
  height: 15px; flex: none; display: flex; align-items: center; justify-content: center;
  background: linear-gradient(#fff, #e6e4d6); border: 1px solid #a8a69a;
}
.thumb {
  height: 146px; flex: none; background: linear-gradient(90deg, #8eaad6, #b4c8e8 40%, #7e9aca);
  border: 1px solid #8aa4cc; border-radius: 2px; display: flex; align-items: center; justify-content: center;
}
.grip { width: 7px; height: 12px; background: repeating-linear-gradient(#8ea6cc 0 1px, #c8d6ec 1px 3px); }
.strack { flex: 1; }
.hsplit { height: 9px; flex: none; display: flex; align-items: center; padding-left: 2px; }
.hdots {
  width: 206px; height: 2px; margin-left: 100px;
  background: repeating-linear-gradient(90deg, #b4b2a4 0 2px, transparent 2px 6px);
}
.tabs { height: 22px; flex: none; display: flex; padding-left: 2px; }
.tab {
  height: 22px; text-align: center; line-height: 23px; font-size: 12px; padding-right: 3px;
  border: 1px solid #c8a030; border-bottom: 0; border-top-left-radius: 6px;
  flex: none;
}
.on { background: linear-gradient(#fbe6a8, #fcd878); border-top-width: 2px; line-height: 22px; }
.t1 { width: 106px; } .t2 { width: 105px; } .t3 { width: 69px; } .t4 { width: 44px; }
.tabbody {
  height: 405px; flex: none; border: 1px solid #c8a030; border-width: 1px 1px 2px 1px;
  padding: 2px 3px 0; display: flex; flex-direction: column;
}
.tree { height: 376px; flex: none; background: #fff; border: 1px solid #84827a; }
.thead { height: 18px; display: flex; background: linear-gradient(#fff, #e6e4d6); border-bottom: 1px solid #84827a; }
.hc { text-align: center; line-height: 19px; border-right: 2px solid #84827a; font-size: 12px; }
.c1 { width: 304px; flex: none; } .c2 { flex: 1; }
.hc.c2 { border-right: 0; }
.trow { height: 23px; display: flex; background: #f1efe2; border-bottom: 1px solid #b4b2a8; }
.tc { display: flex; align-items: center; padding-left: 4px; }
.tc.c1 { border-right: 1px solid #b4b2a8; }
.tc.c2 { padding-left: 0; }
.child { padding-left: 24px; position: relative; }
.vline { position: absolute; left: 27.500px; top: -2px; height: 24px; border-left: 1px solid #7a90b8; }
.vline.half { height: 12px; }
.tg { width: 9px; height: 9px; background: #fff; border: 1px solid #777; flex: none; position: relative; }
.minus { background: linear-gradient(#000, #000) center/5px 1px no-repeat #fff; }
.plus { background: linear-gradient(#000, #000) center/5px 1px no-repeat, linear-gradient(#000, #000) center/1px 5px no-repeat, #fff; }
.dash { width: 7px; height: 1px; background: #7a90b8; flex: none; }
.tname { margin-left: 4px; }
.editrow { display: flex; justify-content: flex-end; padding: 2px 6px 0 0; }
.btn {
  display: flex; align-items: center; justify-content: center; flex: none;
  border: 1px solid #84827a; border-radius: 3px; background: linear-gradient(#fff, #ebe9dc); font-size: 12px;
}
.disabled { width: 59px; height: 21px; color: #a8a890; border-color: #b8b69a; }
.pfoot { height: 34px; flex: none; display: flex; align-items: center; padding: 1px 0 0 4px; }
.arrowbtn { width: 23px; height: 23px; }
.def { width: 107px; height: 21px; margin-left: 189px; border: 2px solid #c8a84c; outline: 1px solid #84827a; outline-offset: -1px; }
.b2 { width: 59px; height: 21px; margin-left: 7px; }
.b3 { width: 59px; height: 21px; margin-left: 7px; }
.vsplit { width: 6px; flex: none; display: flex; flex-direction: column; align-items: center; padding-top: 2px; }
.collapse { height: 26px; }
.vdots {
  width: 2px; height: 352px; margin-top: 168px;
  background: repeating-linear-gradient(#b4b2a4 0 2px, transparent 2px 6px);
}
.work { flex: 1; display: flex; flex-direction: column; min-width: 0; }
.ctools { height: 26px; flex: none; display: flex; align-items: center; padding-left: 4px; }
.ct { width: 24px; height: 25px; display: flex; align-items: center; justify-content: center; flex: none; }
.ct.n { width: 23px; }
.ct.sel { background: #bebcb0; }
.ct.last { margin-left: -3px; }
.slider {
  width: 64px; height: 20px; flex: none; background: #f5f4ea; position: relative;
  background-image: linear-gradient(#000, #000); background-size: 54px 1px; background-position: 5px 8px; background-repeat: no-repeat;
}
.knob { position: absolute; left: 24px; top: 4px; width: 5px; height: 13px; border-right: 1px solid #000; border-bottom: 1px solid #000; }
.canvas { height: 723px; flex: none; background: #789cc4; }
.topo { width: 1133px; height: 723px; }
.links { fill: none; }
.lkbg { stroke: #98b8a4; stroke-width: 1.600px; }
.lkfg { stroke: #30e030; stroke-width: 1px; }
.wire { stroke: #0000e8; stroke-width: 4px; fill: none; }
.frame { fill: none; stroke: #fff; stroke-width: 3px; }
.flagl { font: bold 8px "Liberation Sans", sans-serif; fill: #2040b0; }
.nlabel { font: 10px "Liberation Mono", monospace; text-anchor: middle; fill: #000; }
.wlabel { font: 11px "Liberation Mono", "Noto Sans CJK SC", monospace; text-anchor: middle; fill: #000; }

/* status */
.status { height: 25px; flex: none; display: flex; border-bottom: 2px solid #dad7ca; align-items: center; }
.stcell { height: 22px; display: flex; align-items: center; flex: none; border-right: 1px solid #cfcdc0; }
.s1 { width: 621px; padding-left: 7px; }
.s2 { width: 589px; }
.s3 { flex: 1; border-right: 0; }
.stsep { width: 1px; height: 18px; background: #b8b6a8; margin: 0 7px 0 3px; }
.sttext { margin-left: 9px; white-space: nowrap; letter-spacing: .08px; }

/* taskbar */
.taskbar { height: 43px; flex: none; display: flex; align-items: center; background: #d4d0c8; padding-left: 2px; }
.start {
  width: 47px; height: 37px; display: flex; align-items: center; justify-content: center; gap: 1px; flex: none;
  border: 1px solid; border-color: #fff #404040 #404040 #fff; box-shadow: inset -1px -1px 0 #808080; font-size: 13px;
}
.tsep { width: 3px; height: 32px; flex: none; border-left: 1px solid #fff; border-right: 1px solid #808080; background: #e8e6de; }
.taskbar > .tsep { margin-left: 7px; }
.apps { display: flex; margin-left: 9px; }
.app {
  width: 47px; height: 37px; margin-right: 3px; display: flex; align-items: center; justify-content: center; flex: none;
  border: 1px solid; border-color: #fff #404040 #404040 #fff; box-shadow: inset -1px -1px 0 #808080;
}
.app.plain { border-color: transparent; box-shadow: none; }
.a1 { width: 47px; margin-right: 2px; }
.a2 { margin-right: 3px; }
.active { background: #fff; border-color: #404040 #fff #fff #404040; box-shadow: inset 1px 1px 0 #808080; }
.tile { width: 32px; height: 32px; display: flex; align-items: center; justify-content: center; color: #e8f0ff; }
.ctile { background: radial-gradient(#5870d8, #2038a8 70%, #101c60); font: bold 24px "Liberation Sans", sans-serif; }
.ztile { background: linear-gradient(90deg, #2838a8, #8fa0ea 50%, #2838a8); font: 15px "Liberation Sans", sans-serif; }
.tright { margin-left: auto; display: flex; align-items: center; margin-right: 3px; }
.tright .tsep { margin: 0; }
.tsep.short { height: 22px; width: 2px; }
.kbd { margin-left: 4px; }
.hlp { margin: 0 3px 0 5px; }
.restore { display: flex; flex-direction: column; align-items: center; gap: 2px; margin: 0 3px 0 5px; }
.tray {
  width: 174px; height: 38px; display: flex; align-items: center; padding-left: 5px;
  border: 1px solid; border-color: #808080 #fff #fff #808080; background: #d4d0c8;
}
.t-spk { margin-left: 10px; }
.t-flag { margin-left: 6px; }
.t-net { margin-left: 7px; }
.clock { width: 62px; margin-left: 6px; display: flex; flex-direction: column; align-items: center; font-size: 12px; line-height: 16px; white-space: nowrap; letter-spacing: .2px; }
```
